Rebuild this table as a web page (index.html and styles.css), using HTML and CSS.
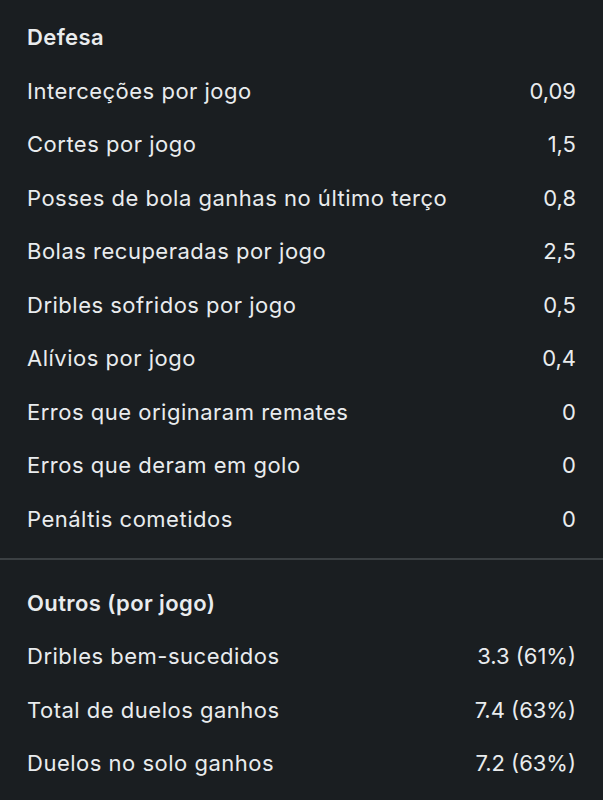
FILE: index.html
```html
<!DOCTYPE html>
<html lang="pt">
<head>
<meta charset="utf-8">
<link rel="stylesheet" href="styles.css">
</head>
<body>
<section class="section first">
  <h2 class="title">Defesa</h2>
  <div class="row"><span>Interceções por jogo</span><span>0,09</span></div>
  <div class="row"><span>Cortes por jogo</span><span>1,5</span></div>
  <div class="row"><span>Posses de bola ganhas no último terço</span><span>0,8</span></div>
  <div class="row"><span>Bolas recuperadas por jogo</span><span>2,5</span></div>
  <div class="row"><span>Dribles sofridos por jogo</span><span>0,5</span></div>
  <div class="row"><span>Alívios por jogo</span><span>0,4</span></div>
  <div class="row"><span>Erros que originaram remates</span><span>0</span></div>
  <div class="row"><span>Erros que deram em golo</span><span>0</span></div>
  <div class="row"><span>Penáltis cometidos</span><span>0</span></div>
</section>
<section class="section second">
  <h2 class="title">Outros (por jogo)</h2>
  <div class="row"><span>Dribles bem-sucedidos</span><span>3.3 (61%)</span></div>
  <div class="row"><span>Total de duelos ganhos</span><span>7.4 (63%)</span></div>
  <div class="row"><span>Duelos no solo ganhos</span><span>7.2 (63%)</span></div>
</section>
</body>
</html>
```
FILE: styles.css
```css
html, body {
  margin: 0;
  padding: 0;
  background: #1a1e21;
}
body {
  font-family: Inter, "Noto Sans", sans-serif;
  color: #e9ecee;
  width: 603px;
  height: 800px;
  overflow: hidden;
}
.section {
  padding: 0 27px;
}
.first {
  padding-top: 10px;
  padding-bottom: 12px;
  border-bottom: 2px solid #3b4043;
}
.second {
  padding-top: 16px;
}
.title {
  margin: 0;
  height: 54px;
  line-height: 54px;
  font-size: 22px;
  font-weight: 600;
  letter-spacing: 0.4px;
}
.row {
  display: flex;
  justify-content: space-between;
  align-items: center;
  height: 53.5px;
  font-size: 22px;
  font-weight: 400;
  letter-spacing: 0.5px;
}
.row span:last-child {
  letter-spacing: 0;
}
```
